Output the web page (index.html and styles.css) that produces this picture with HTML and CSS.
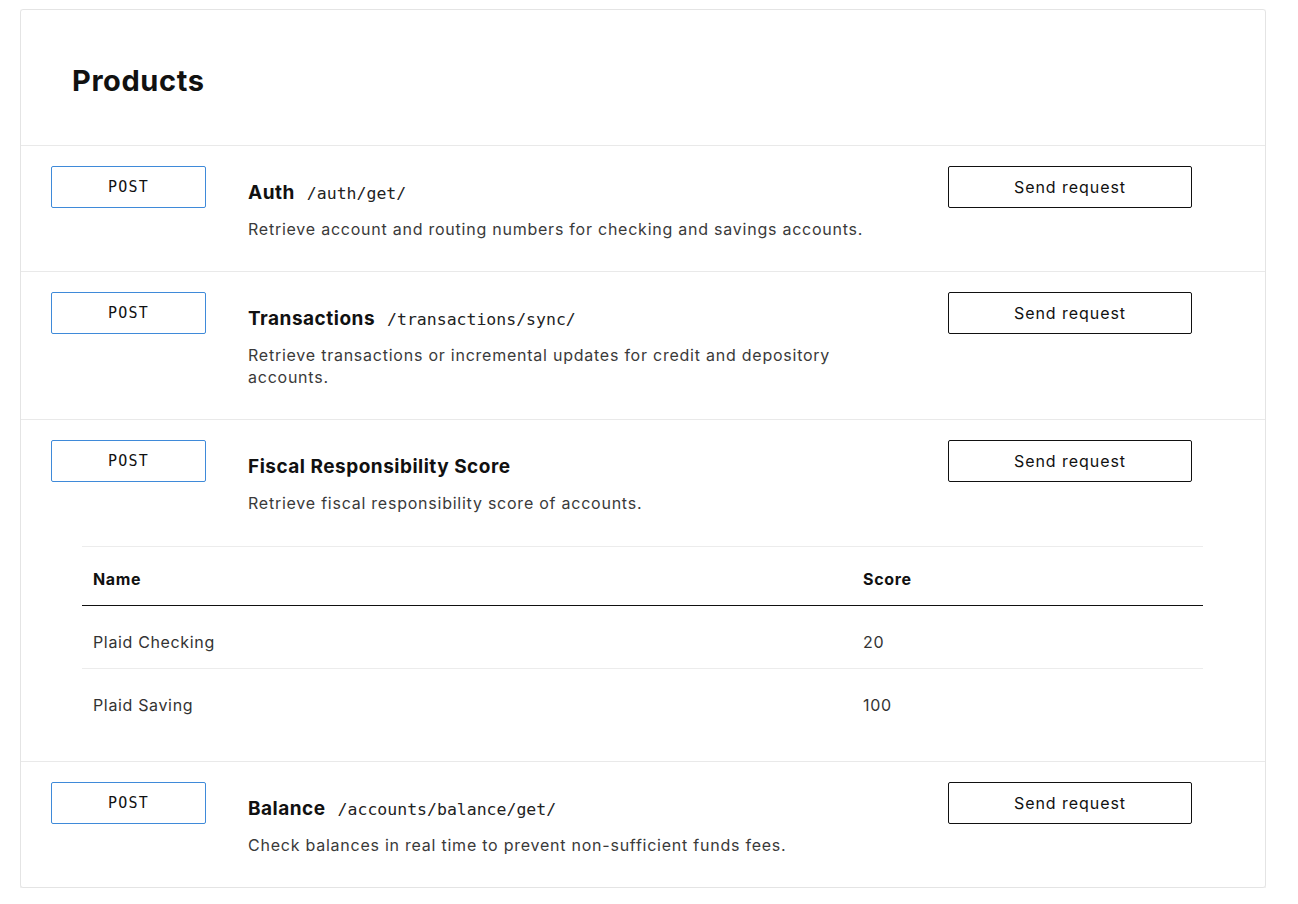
FILE: index.html
```html
<!DOCTYPE html>
<html lang="en">
<head>
<meta charset="utf-8">
<title>Products</title>
<link rel="stylesheet" href="styles.css">
</head>
<body>
<div class="card">
  <div class="card-header">
    <h1 class="title">Products</h1>
  </div>

  <div class="product">
    <div class="product-row">
      <button class="method">POST</button>
      <div class="info">
        <div class="name-line"><span class="name">Auth</span><span class="path">/auth/get/</span></div>
        <p class="desc">Retrieve account and routing numbers for checking and savings accounts.</p>
      </div>
      <button class="send">Send request</button>
    </div>
  </div>

  <div class="product">
    <div class="product-row">
      <button class="method">POST</button>
      <div class="info">
        <div class="name-line"><span class="name">Transactions</span><span class="path">/transactions/sync/</span></div>
        <p class="desc">Retrieve transactions or incremental updates for credit and depository accounts.</p>
      </div>
      <button class="send">Send request</button>
    </div>
  </div>

  <div class="product">
    <div class="product-row">
      <button class="method">POST</button>
      <div class="info">
        <div class="name-line"><span class="name">Fiscal Responsibility Score</span></div>
        <p class="desc">Retrieve fiscal responsibility score of accounts.</p>
      </div>
      <button class="send">Send request</button>
    </div>
    <table class="results">
      <thead>
        <tr><th class="col-name">Name</th><th>Score</th></tr>
      </thead>
      <tbody>
        <tr><td>Plaid Checking</td><td>20</td></tr>
        <tr><td>Plaid Saving</td><td>100</td></tr>
      </tbody>
    </table>
  </div>

  <div class="product">
    <div class="product-row">
      <button class="method">POST</button>
      <div class="info">
        <div class="name-line"><span class="name">Balance</span><span class="path">/accounts/balance/get/</span></div>
        <p class="desc">Check balances in real time to prevent non-sufficient funds fees.</p>
      </div>
      <button class="send">Send request</button>
    </div>
  </div>
</div>
</body>
</html>
```

FILE: styles.css
```css
* { box-sizing: border-box; }

body {
  margin: 9px 32px 0 20px;
  background: #ffffff;
  font-family: Inter, "Liberation Sans", sans-serif;
  color: #111111;
}

.card {
  width: 1246px;
  border: 1px solid #e4e4e4;
  border-radius: 3px;
  background: #ffffff;
  box-shadow: 0 8px 22px rgba(0, 0, 0, 0.14);
}

.card-header {
  padding: 53px 51px 46px;
  border-bottom: 1px solid #e9e9e9;
}

.title {
  margin: 0;
  font-size: 29px;
  line-height: 36px;
  font-weight: 700;
  color: #111111;
  letter-spacing: 0.6px;
}

.product {
  border-bottom: 1px solid #e9e9e9;
}

.product:last-child {
  border-bottom: none;
}

.product-row {
  display: grid;
  grid-template-columns: 155px 640px 244px;
  column-gap: 42px;
  padding: 20px 73px 31px 30px;
}

.product-row .send {
  margin-left: 18px;
}

.method {
  height: 42px;
  width: 155px;
  border: 1px solid #3f8ad9;
  border-radius: 2px;
  background: #ffffff;
  font-family: "DejaVu Sans Mono", "Liberation Mono", monospace;
  font-size: 15px;
  letter-spacing: 1.2px;
  color: #111111;
  padding: 0;
}

.info {
  padding-top: 13px;
}

.name-line {
  line-height: 28px;
  height: 28px;
}

.name {
  font-size: 19px;
  font-weight: 700;
  letter-spacing: 0.5px;
  color: #111111;
}

.path {
  margin-left: 12px;
  font-family: "DejaVu Sans Mono", "Liberation Mono", monospace;
  font-size: 16.5px;
  color: #222222;
}

.desc {
  margin: 11px 0 0;
  font-size: 16px;
  line-height: 22px;
  letter-spacing: 0.76px;
  color: #3a3a3a;
}

.send {
  height: 42px;
  width: 244px;
  border: 1px solid #111111;
  border-radius: 2px;
  background: #ffffff;
  font-family: Inter, "Liberation Sans", sans-serif;
  font-size: 16px;
  letter-spacing: 0.95px;
  color: #111111;
  padding: 0;
}

.results {
  width: 1121px;
  margin: 1px 0 30px 61px;
  border-collapse: collapse;
  border-top: 1px solid #ececec;
}

.results th,
.results td {
  text-align: left;
  padding: 20px 11px 14px;
  font-size: 16px;
  line-height: 24px;
  letter-spacing: 0.65px;
}

.results th {
  font-weight: 700;
  color: #111111;
  border-bottom: 1px solid #111111;
}

.results .col-name {
  width: 770px;
}

.results td {
  padding-top: 24px;
  color: #333333;
  border-bottom: 1px solid #ececec;
}

.results tbody tr:last-child td {
  border-bottom: none;
}
```
